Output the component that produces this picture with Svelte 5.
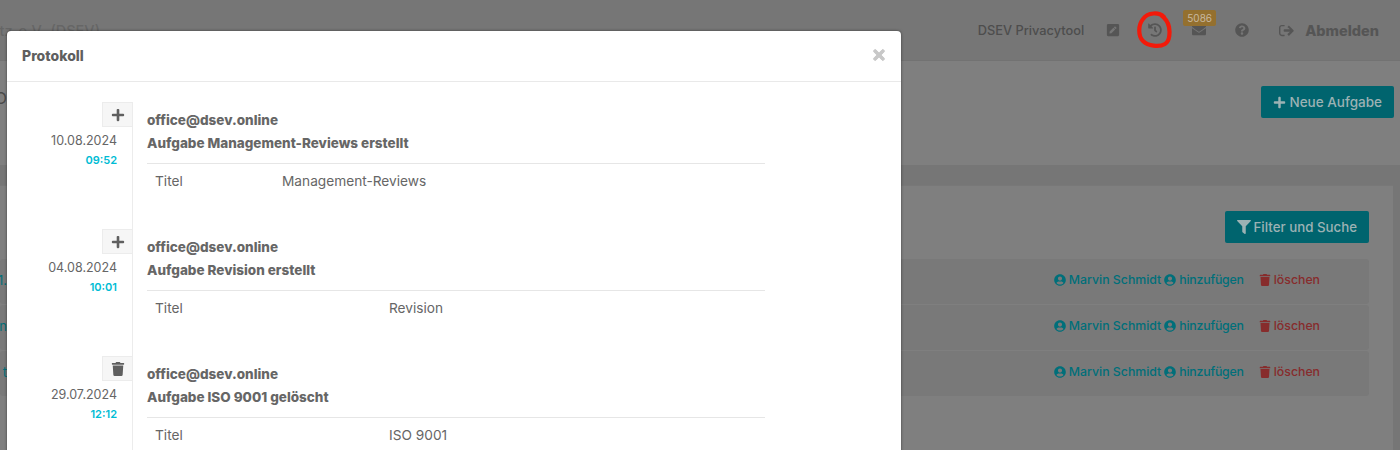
<script>
	const icons = {
		plus: ['0 0 448 512', 'M416 208H272V64c0-17.67-14.33-32-32-32h-32c-17.67 0-32 14.33-32 32v144H32c-17.67 0-32 14.33-32 32v32c0 17.67 14.33 32 32 32h144v144c0 17.67 14.33 32 32 32h32c17.67 0 32-14.33 32-32V304h144c17.67 0 32-14.33 32-32v-32c0-17.67-14.33-32-32-32z'],
		trash: ['0 0 448 512', 'M432 32H312l-9.4-18.7A24 24 0 0 0 281.1 0H166.8a23.72 23.72 0 0 0-21.4 13.3L136 32H16A16 16 0 0 0 0 48v32a16 16 0 0 0 16 16h416a16 16 0 0 0 16-16V48a16 16 0 0 0-16-16zM53.2 467a48 48 0 0 0 47.9 45h245.8a48 48 0 0 0 47.9-45L416 128H32z'],
		user: ['0 0 496 512', 'M248 8C111 8 0 119 0 256s111 248 248 248 248-111 248-248S385 8 248 8zm0 96c48.6 0 88 39.4 88 88s-39.4 88-88 88-88-39.4-88-88 39.4-88 88-88zm0 344c-58.7 0-111.3-26.6-146.5-68.2 18.8-35.4 55.6-59.8 98.5-59.8 2.4 0 4.8.4 7.1 1.1 13 4.2 26.6 6.9 40.9 6.9 14.3 0 28-2.7 40.9-6.9 2.3-.7 4.7-1.1 7.1-1.1 42.9 0 79.7 24.4 98.5 59.8C359.3 421.4 306.7 448 248 448z'],
		filter: ['0 0 512 512', 'M487.976 0H24.028C2.71 0-8.047 25.866 7.058 40.971L192 225.941V432c0 7.831 3.821 15.17 10.237 19.662l80 55.98C298.02 518.69 320 507.493 320 487.98V225.941l184.947-184.97C520.021 25.896 509.338 0 487.976 0z'],
		history: ['0 0 512 512', 'M504 255.531c.253 136.64-111.18 248.372-247.82 248.468-59.015.042-113.223-20.53-155.822-54.911-11.077-8.94-11.905-25.541-1.839-35.607l11.267-11.267c8.609-8.609 22.353-9.551 31.891-1.984C173.062 425.135 212.781 440 256 440c101.705 0 184-82.311 184-184 0-101.705-82.311-184-184-184-48.814 0-93.149 18.969-126.068 49.932l50.754 50.754c10.08 10.08 2.941 27.314-11.313 27.314H24c-8.837 0-16-7.163-16-16V38.627c0-14.254 17.234-21.393 27.314-11.314l49.372 49.372C129.209 34.136 189.552 8 256 8c136.81 0 247.747 110.78 248 247.531zm-180.912 78.784l9.823-12.63c8.138-10.463 6.253-25.542-4.21-33.679L288 256.349V152c0-13.255-10.745-24-24-24h-16c-13.255 0-24 10.745-24 24v135.651l65.409 50.874c10.463 8.137 25.541 6.253 33.679-4.21z'],
		envelope: ['0 0 512 512', 'M502.3 190.8c3.9-3.1 9.7-.2 9.7 4.7V400c0 26.5-21.5 48-48 48H48c-26.5 0-48-21.5-48-48V195.6c0-5 5.7-7.8 9.7-4.7 22.4 17.4 52.1 39.5 154.1 113.6 21.1 15.4 56.7 47.8 92.2 47.6 35.7.3 72-32.8 92.3-47.6 102-74.1 131.6-96.3 154-113.7zM256 320c23.2.4 56.6-29.2 73.4-41.4 132.7-96.3 142.8-104.7 173.4-128.7 5.8-4.5 9.2-11.5 9.2-18.9v-19c0-26.5-21.5-48-48-48H48C21.5 64 0 85.5 0 112v19c0 7.4 3.4 14.3 9.2 18.9 30.6 23.9 40.7 32.4 173.4 128.7 16.8 12.2 50.2 41.8 73.4 41.4z'],
		help: ['0 0 512 512', 'M504 256c0 136.997-111.043 248-248 248S8 392.997 8 256C8 119.083 119.043 8 256 8s248 111.083 248 248zM262.655 90c-54.497 0-89.255 22.957-116.549 63.758-3.536 5.286-2.353 12.415 2.715 16.258l34.699 26.31c5.205 3.947 12.621 3.008 16.665-2.122 17.864-22.658 30.113-35.797 57.303-35.797 20.429 0 45.698 13.148 45.698 32.958 0 14.976-12.363 22.667-32.534 33.976C247.128 238.528 216 254.941 216 296v4c0 6.627 5.373 12 12 12h56c6.627 0 12-5.373 12-12v-1.333c0-28.462 83.186-29.647 83.186-106.667 0-58.002-60.165-102-116.531-102zM256 338c-25.365 0-46 20.635-46 46 0 25.364 20.635 46 46 46s46-20.636 46-46c0-25.365-20.635-46-46-46z'],
		edit: ['0 0 448 512', 'M400 480H48c-26.5 0-48-21.5-48-48V80c0-26.5 21.5-48 48-48h352c26.5 0 48 21.5 48 48v352c0 26.5-21.5 48-48 48zM238.1 177.9L102.4 313.6l-6.3 57.1c-.8 7.6 5.6 14.1 13.3 13.3l57.1-6.3L302.2 242c2.3-2.3 2.3-6.1 0-8.5L246.7 178c-2.5-2.4-6.3-2.4-8.6-.1zM345 165.1L314.9 135c-9.4-9.4-24.6-9.4-33.9 0l-23.1 23.1c-2.3 2.3-2.3 6.1 0 8.5l55.5 55.5c2.3 2.3 6.1 2.3 8.5 0L345 199c9.3-9.3 9.3-24.5 0-33.9z'],
		logout: ['0 0 512 512', 'M180 448H96c-53 0-96-43-96-96V160c0-53 43-96 96-96h84c6.6 0 12 5.4 12 12v24c0 6.6-5.4 12-12 12H96c-26.5 0-48 21.5-48 48v192c0 26.5 21.5 48 48 48h84c6.6 0 12 5.4 12 12v24c0 6.6-5.4 12-12 12zm117.9-303.1l77.6 71.1H184c-13.3 0-24 10.7-24 24v32c0 13.3 10.7 24 24 24h191.5l-77.6 71.1c-10.3 9.4-10.8 25.5-1 35.5l21.8 21.8c9.3 9.3 24.5 9.4 33.9.1l144-143.9c9.4-9.4 9.4-24.6 0-33.9l-144-144c-9.3-9.3-24.5-9.3-33.9.1l-21.8 21.8c-9.8 10-9.3 26.1 1 35.5z'],
		times: ['0 0 352 512', 'M242.72 256l100.07-100.07c12.28-12.28 12.28-32.19 0-44.48l-22.24-22.24c-12.28-12.28-32.19-12.28-44.48 0L176 189.28 75.93 89.21c-12.28-12.28-32.19-12.28-44.48 0L9.21 111.45c-12.28 12.28-12.28 32.19 0 44.48L109.28 256 9.21 356.07c-12.28 12.28-12.28 32.19 0 44.48l22.24 22.24c12.28 12.28 32.2 12.28 44.48 0L176 322.72l100.07 100.07c12.28 12.28 32.2 12.28 44.48 0l22.24-22.24c12.28-12.28 12.28-32.19 0-44.48L242.72 256z']
	};

	const entries = [
		{ icon: 'plus', date: '10.08.2024', time: '09:52', title: 'Aufgabe Management-Reviews erstellt', value: 'Management-Reviews', short: true },
		{ icon: 'plus', date: '04.08.2024', time: '10:01', title: 'Aufgabe Revision erstellt', value: 'Revision', short: false },
		{ icon: 'trash', date: '29.07.2024', time: '12:12', title: 'Aufgabe ISO 9001 gelöscht', value: 'ISO 9001', short: false }
	];

	const rows = ['01.', 'n', 't'];
</script>

{#snippet icon(name, size)}
	<svg class="icon" width={size} height={size} viewBox={icons[name][0]} aria-hidden="true">
		<path fill="currentColor" d={icons[name][1]} />
	</svg>
{/snippet}

<div class="page">
	<header class="topbar">
		<div class="brand"><span>Datenschutz e.V. (DSEV)</span></div>
		<nav class="nav">
			<span class="tool">DSEV Privacytool</span>
			<span class="nav-icon edit">{@render icon('edit', 14)}</span>
			<span class="nav-icon history">{@render icon('history', 14)}</span>
			<span class="nav-icon mail">
				{@render icon('envelope', 14)}
				<span class="badge">5086</span>
			</span>
			<span class="nav-icon help">{@render icon('help', 14)}</span>
			<span class="logout">{@render icon('logout', 15)}<b>Abmelden</b></span>
		</nav>
	</header>

	<section class="head">
		<span class="cut">O</span>
		<button class="btn new">{@render icon('plus', 13)}Neue Aufgabe</button>
	</section>

	<section class="card">
		<div class="filter-row">
			<button class="btn filter">{@render icon('filter', 14)}Filter und Suche</button>
		</div>
		{#each rows as row}
			<div class="row">
				<span class="cut">{row}</span>
				<span class="actions">
					<a>{@render icon('user', 12)}Marvin Schmidt</a>
					<a class="add">{@render icon('user', 12)}hinzufügen</a>
					<a class="del">{@render icon('trash', 12)}löschen</a>
				</span>
			</div>
		{/each}
	</section>

	<div class="modal">
		<div class="modal-head">
			<h4>Protokoll</h4>
			<span class="close">{@render icon('times', 16)}</span>
		</div>
		<div class="timeline">
			{#each entries as e}
				<div class="item">
					<div class="when">
						<span class="marker">{@render icon(e.icon, 14)}</span>
						<span class="date">{e.date}</span>
						<span class="time">{e.time}</span>
					</div>
					<div class="entry">
						<div class="who">office@dsev.online</div>
						<div class="what">{e.title}</div>
						<div class="change" class:short={e.short}>
							<span>Titel</span>
							<span>{e.value}</span>
						</div>
					</div>
				</div>
			{/each}
		</div>
	</div>

	<svg class="scribble" width="44" height="44" viewBox="0 0 44 44" aria-hidden="true">
		<path d="M32 9C27 4 16 4 11 11C6 17 6 28 11 33C16 38 27 39.500 33 36C38 33 38 24 37 19C36 14 33 10 29 7" fill="none" stroke="#f31a0a" stroke-width="4.200" stroke-linecap="round" />
	</svg>
</div>

<style>
	:global(body) {
		margin: 0;
	}

	/* the page is drawn in its dimmed colours, as it sits behind the open dialog */
	.page {
		position: relative;
		width: 1400px;
		height: 450px;
		overflow: hidden;
		background: #767676;
		font-family: Inter, 'Open Sans', sans-serif;
		font-size: 13px;
		color: #4f4f4f;
	}

	.icon {
		display: inline-block;
		vertical-align: -2px;
		flex: none;
	}

	.topbar {
		display: flex;
		justify-content: space-between;
		height: 60px;
		border-bottom: 1px solid #727272;
		background: #767676;
	}

	.brand {
		display: flex;
		justify-content: flex-end;
		align-items: center;
		width: 100px;
		overflow: hidden;
		white-space: nowrap;
		font-size: 14.500px;
		font-weight: 500;
		word-spacing: 2px;
		color: #666;
	}

	.nav {
		display: flex;
		align-items: center;
		padding-right: 21px;
	}

	.tool {
		margin-right: 22px;
		font-weight: 500;
		font-size: 12.800px;
		color: #4d4d4d;
	}

	.nav-icon {
		position: relative;
		display: flex;
		width: 14px;
		color: #555;
	}

	.edit { margin-right: 28px; }
	.history { margin-right: 30px; }
	.mail { margin-right: 29px; }
	.help { margin-right: 30px; }

	.badge {
		position: absolute;
		left: -9px;
		top: -13px;
		width: 33px;
		height: 16px;
		border-radius: 2px;
		background: #94702f;
		color: #c8b8a0;
		font-size: 10px;
		line-height: 16px;
		text-align: center;
	}

	.logout {
		display: flex;
		align-items: center;
		gap: 11px;
		font-size: 14.500px;
		color: #555;
	}

	.logout b {
		font-weight: 800;
	}

	.head {
		display: flex;
		justify-content: space-between;
		height: 104px;
		box-sizing: border-box;
		padding: 25px 6px 0 0;
		background: #7f7f7f;
	}

	.head .cut {
		margin-top: 2px;
		font-size: 16px;
		color: #4a4a4a;
	}

	.cut {
		display: flex;
		justify-content: flex-end;
		width: 7px;
		overflow: hidden;
		white-space: nowrap;
	}

	.btn {
		display: inline-flex;
		align-items: center;
		gap: 3px;
		height: 32px;
		border: 0;
		border-radius: 2px;
		padding: 0 12px;
		background: #00646e;
		color: #9cb2b4;
		font-family: inherit;
		font-size: 13.500px;
		font-weight: 500;
	}

	.btn.filter {
		font-size: 13.300px;
	}

	.card {
		margin: 20px 7px 0 0;
		padding-top: 25px;
		height: 280px;
		box-sizing: border-box;
		background: #7f7f7f;
		border-top: 1px solid #787878;
	}

	.filter-row {
		display: flex;
		justify-content: flex-end;
		margin: 0 24px 16px 0;
	}

	.row {
		display: flex;
		justify-content: space-between;
		align-items: center;
		height: 45px;
		box-sizing: border-box;
		padding-bottom: 4px;
		margin: 0 24px 1px 0;
		border-radius: 3px;
		background: #797979;
	}

	.row .cut {
		width: 7px;
		font-size: 13px;
		color: #006f7a;
	}

	.row:first-of-type .cut {
		color: #4a4a4a;
	}

	.actions {
		display: flex;
		align-items: center;
		gap: 3px;
		padding-right: 49px;
		font-size: 12.300px;
		font-weight: 500;
		color: #006f7a;
	}

	.actions a {
		display: flex;
		align-items: center;
		gap: 3px;
		white-space: nowrap;
	}

	.actions .add {
		letter-spacing: -0.200px;
	}

	.actions .del {
		margin-left: 12px;
		color: #872c2c;
	}

	.modal {
		position: absolute;
		left: 7px;
		top: 31px;
		width: 894px;
		height: 500px;
		border-radius: 4px;
		background: #fff;
		box-shadow: 0 0 3px rgba(0, 0, 0, 0.5);
	}

	.modal-head {
		display: flex;
		justify-content: space-between;
		align-items: center;
		box-sizing: border-box;
		height: 51px;
		padding: 0 14px 2px 15px;
		border-bottom: 1px solid #e9e9e9;
	}

	h4 {
		margin: 0;
		font-size: 14px;
		font-weight: 800;
		color: #5f5f5f;
	}

	.close {
		display: flex;
		color: #c8c8c8;
	}

	.close path {
		stroke: currentColor;
		stroke-width: 30;
	}

	.timeline {
		padding-top: 20px;
	}

	.item {
		display: flex;
		width: 760px;
		height: 127.200px;
	}

	.when {
		display: flex;
		flex-direction: column;
		align-items: flex-end;
		flex: none;
		box-sizing: border-box;
		width: 126px;
		padding-right: 15px;
		border-right: 1px solid #ececec;
	}

	.marker {
		display: flex;
		align-items: center;
		justify-content: center;
		box-sizing: border-box;
		width: 30px;
		height: 25px;
		margin: 0 -15px 0 0;
		border: 1px solid #ececec;
		border-right: 0;
		background: #f6f6f6;
		color: #5f5f5f;
	}

	.date {
		margin-top: 6px;
		font-size: 12.500px;
		color: #666;
	}

	.time {
		margin-top: 4.500px;
		font-size: 11px;
		font-weight: 600;
		color: #00bcd4;
	}

	.entry {
		flex: none;
		width: 618px;
		margin-left: 14px;
	}

	.who, .what {
		font-size: 13.500px;
		font-weight: 800;
		color: #666;
		line-height: 23px;
	}

	.who {
		margin-top: 7px;
	}

	.change {
		display: grid;
		grid-template-columns: 234px 1fr;
		margin-top: 8px;
		padding: 9px 8px 0;
		border-top: 1px solid #e6e6e6;
		font-size: 13.700px;
		color: #666;
	}

	.change.short {
		grid-template-columns: 127px 1fr;
	}

	.scribble {
		position: absolute;
		left: 1132px;
		top: 8px;
	}
</style>
